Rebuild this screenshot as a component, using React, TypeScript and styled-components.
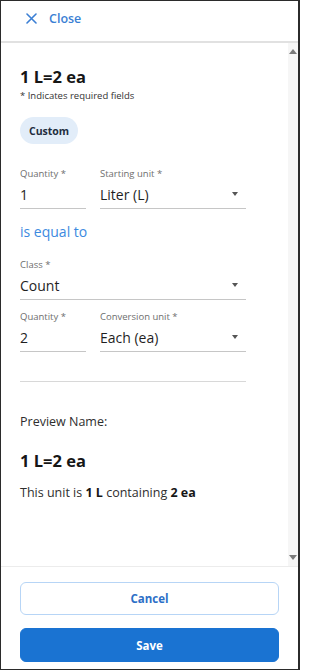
import React from 'react';
import styled, { createGlobalStyle } from 'styled-components';

const GlobalStyle = createGlobalStyle`
  * {
    box-sizing: border-box;
  }

  body {
    margin: 0;
    background: #ffffff;
    font-family: 'Open Sans', 'Noto Sans', sans-serif;
  }
`;

const Frame = styled.div`
  width: 300px;
  height: 670px;
  display: flex;
  flex-direction: column;
  border: 1px solid #2b2b2b;
  border-right-width: 2px;
  background: #ffffff;
`;

const Header = styled.header`
  height: 42px;
  flex-shrink: 0;
  display: flex;
  align-items: center;
  gap: 12px;
  padding: 0 0 5px 25px;
  border-bottom: 2px solid #e1e1e1;
`;

const CloseLabel = styled.span`
  font-size: 12.5px;
  font-weight: 600;
  color: #3b7fd4;
`;

const Body = styled.div`
  flex: 1;
  min-height: 0;
  display: flex;
  border-bottom: 1px solid #ececec;
`;

const Content = styled.div`
  flex: 1;
  padding: 24px 0 0 19px;
`;

const ScrollTrack = styled.div`
  width: 10px;
  flex-shrink: 0;
  background: #f6f6f6;
  display: flex;
  flex-direction: column;
  justify-content: space-between;
  align-items: center;
  padding: 6px 0 6px;
`;

const Arrow = styled.span<{ $down?: boolean }>`
  width: 0;
  height: 0;
  border-left: 4px solid transparent;
  border-right: 4px solid transparent;
  ${({ $down }) =>
    $down ? 'border-top: 5px solid #7a7a7a;' : 'border-bottom: 5px solid #7a7a7a;'}
`;

const Title = styled.h1`
  margin: 0;
  font-size: 16.5px;
  font-weight: 700;
  line-height: 20px;
  color: #161616;
`;

const Hint = styled.p`
  margin: 3px 0 0;
  font-size: 9.5px;
  line-height: 12px;
  color: #333333;
`;

const Chip = styled.span`
  display: inline-flex;
  align-items: center;
  height: 27px;
  margin-top: 15px;
  padding: 0 9px;
  border-radius: 14px;
  background: #e2edf9;
  font-size: 10.5px;
  font-weight: 700;
  color: #1f2e3f;
`;

const FieldRow = styled.div<{ $top: number }>`
  display: flex;
  gap: 14px;
  width: 226px;
  margin-top: ${({ $top }) => $top}px;
`;

const Field = styled.div<{ $grow?: boolean }>`
  display: flex;
  flex-direction: column;
  ${({ $grow }) => ($grow ? 'flex: 1;' : 'width: 66px;')}
`;

const Label = styled.span`
  font-size: 9.5px;
  line-height: 13px;
  color: #6e6e6e;
`;

const ValueLine = styled.div`
  display: flex;
  align-items: center;
  justify-content: space-between;
  height: 29px;
  padding-right: 8px;
  border-bottom: 1.5px solid #c6c6c6;
  font-size: 14px;
  color: #1f1f1f;
`;

const Caret = styled.span`
  width: 0;
  height: 0;
  border-left: 3.5px solid transparent;
  border-right: 3.5px solid transparent;
  border-top: 4px solid #555555;
`;

const EqualText = styled.p`
  margin: 14px 0 0;
  font-size: 14px;
  line-height: 18px;
  color: #3c8ae0;
`;

const Divider = styled.hr`
  width: 226px;
  margin: 29px 0 0;
  border: none;
  border-top: 1.5px solid #d8d8d8;
`;

const PreviewLabel = styled.p`
  margin: 32px 0 0;
  font-size: 12.5px;
  line-height: 16px;
  color: #2e2e2e;
`;

const PreviewTitle = styled(Title)`
  margin-top: 21px;
`;

const Sentence = styled.p`
  margin: 14px 0 0;
  font-size: 12.5px;
  line-height: 16px;
  color: #2e2e2e;

  b {
    font-weight: 700;
    color: #161616;
  }
`;

const Footer = styled.footer`
  flex-shrink: 0;
  display: flex;
  flex-direction: column;
  gap: 13px;
  padding: 15px 19px 7px 19px;
`;

const Button = styled.button<{ $primary?: boolean }>`
  height: ${({ $primary }) => ($primary ? 34 : 33)}px;
  border-radius: 6px;
  font-family: inherit;
  font-size: 11.5px;
  font-weight: 700;
  cursor: pointer;
  border: 1.5px solid ${({ $primary }) => ($primary ? '#1a73d2' : '#b7d5f6')};
  background: ${({ $primary }) => ($primary ? '#1a73d2' : '#ffffff')};
  color: ${({ $primary }) => ($primary ? '#ffffff' : '#2c6fc7')};
`;

const SelectField: React.FC<{ label: string; value: string; grow?: boolean; caret?: boolean }> = ({
  label,
  value,
  grow,
  caret,
}) => (
  <Field $grow={grow}>
    <Label>{label} *</Label>
    <ValueLine>
      <span>{value}</span>
      {caret && <Caret />}
    </ValueLine>
  </Field>
);

const App: React.FC = () => (
  <>
    <GlobalStyle />
    <Frame>
      <Header>
        <svg width="11" height="11" viewBox="0 0 11 11" fill="none">
          <path d="M1 1L10 10M10 1L1 10" stroke="#3b7fd4" strokeWidth="1.6" strokeLinecap="round" />
        </svg>
        <CloseLabel>Close</CloseLabel>
      </Header>

      <Body>
        <Content>
          <Title>1 L=2 ea</Title>
          <Hint>* Indicates required fields</Hint>
          <Chip>Custom</Chip>

          <FieldRow $top={23}>
            <SelectField label="Quantity" value="1" />
            <SelectField label="Starting unit" value="Liter (L)" grow caret />
          </FieldRow>

          <EqualText>is equal to</EqualText>

          <FieldRow $top={17}>
            <SelectField label="Class" value="Count" grow caret />
          </FieldRow>

          <FieldRow $top={10}>
            <SelectField label="Quantity" value="2" />
            <SelectField label="Conversion unit" value="Each (ea)" grow caret />
          </FieldRow>

          <Divider />

          <PreviewLabel>Preview Name:</PreviewLabel>
          <PreviewTitle>1 L=2 ea</PreviewTitle>
          <Sentence>
            This unit is <b>1 L</b> containing <b>2 ea</b>
          </Sentence>
        </Content>
        <ScrollTrack>
          <Arrow />
          <Arrow $down />
        </ScrollTrack>
      </Body>

      <Footer>
        <Button>Cancel</Button>
        <Button $primary>Save</Button>
      </Footer>
    </Frame>
  </>
);

export default App;
